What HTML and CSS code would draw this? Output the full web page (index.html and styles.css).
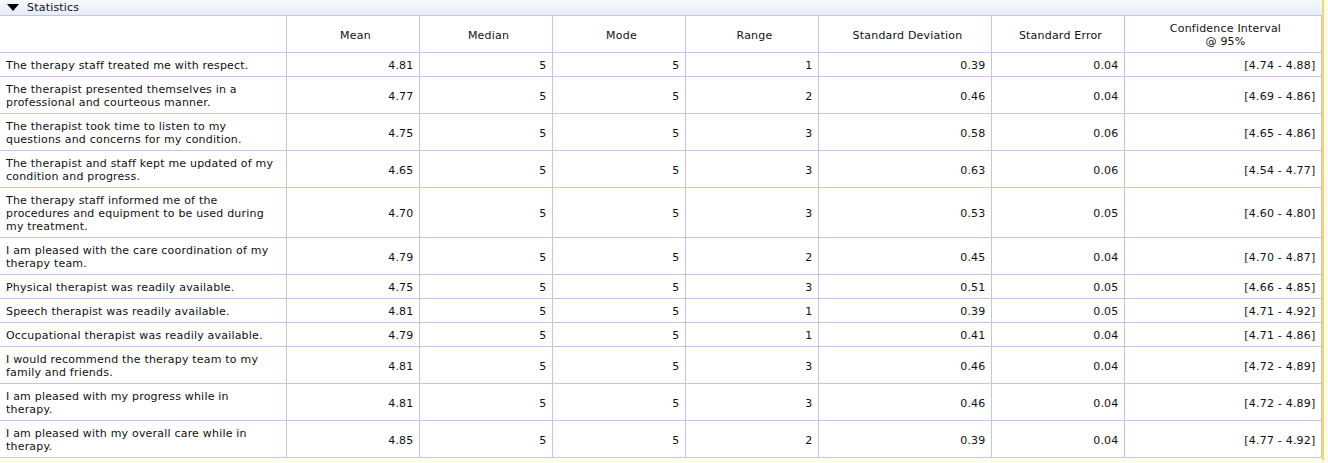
FILE: index.html
```html
<!DOCTYPE html>
<html>
<head>
<meta charset="utf-8">
<link rel="stylesheet" href="styles.css">
</head>
<body>
<div class="panel">
  <div class="bar">
    <svg class="tri" width="12" height="7" viewBox="0 0 12 7"><polygon points="0,0 12,0 6,7" fill="#000"/></svg>
    <span class="bar-title">Statistics</span>
  </div>
  <table class="stats">
    <colgroup>
      <col class="c-q"><col class="c-n"><col class="c-n"><col class="c-n"><col class="c-n"><col class="c-sd"><col class="c-n"><col class="c-ci">
    </colgroup>
    <thead>
      <tr>
        <th></th><th>Mean</th><th>Median</th><th>Mode</th><th>Range</th><th>Standard Deviation</th><th>Standard Error</th><th>Confidence Interval<br>@ 95%</th>
      </tr>
    </thead>
    <tbody>
      <tr><td>The therapy staff treated me with respect.</td><td>4.81</td><td>5</td><td>5</td><td>1</td><td>0.39</td><td>0.04</td><td>[4.74 - 4.88]</td></tr>
      <tr><td>The therapist presented themselves in a professional and courteous manner.</td><td>4.77</td><td>5</td><td>5</td><td>2</td><td>0.46</td><td>0.04</td><td>[4.69 - 4.86]</td></tr>
      <tr><td>The therapist took time to listen to my questions and concerns for my condition.</td><td>4.75</td><td>5</td><td>5</td><td>3</td><td>0.58</td><td>0.06</td><td>[4.65 - 4.86]</td></tr>
      <tr><td>The therapist and staff kept me updated of my condition and progress.</td><td>4.65</td><td>5</td><td>5</td><td>3</td><td>0.63</td><td>0.06</td><td>[4.54 - 4.77]</td></tr>
      <tr><td>The therapy staff informed me of the procedures and equipment to be used during my treatment.</td><td>4.70</td><td>5</td><td>5</td><td>3</td><td>0.53</td><td>0.05</td><td>[4.60 - 4.80]</td></tr>
      <tr><td>I am pleased with the care coordination of my therapy team.</td><td>4.79</td><td>5</td><td>5</td><td>2</td><td>0.45</td><td>0.04</td><td>[4.70 - 4.87]</td></tr>
      <tr><td>Physical therapist was readily available.</td><td>4.75</td><td>5</td><td>5</td><td>3</td><td>0.51</td><td>0.05</td><td>[4.66 - 4.85]</td></tr>
      <tr><td>Speech therapist was readily available.</td><td>4.81</td><td>5</td><td>5</td><td>1</td><td>0.39</td><td>0.05</td><td>[4.71 - 4.92]</td></tr>
      <tr><td>Occupational therapist was readily available.</td><td>4.79</td><td>5</td><td>5</td><td>1</td><td>0.41</td><td>0.04</td><td>[4.71 - 4.86]</td></tr>
      <tr><td>I would recommend the therapy team to my family and friends.</td><td>4.81</td><td>5</td><td>5</td><td>3</td><td>0.46</td><td>0.04</td><td>[4.72 - 4.89]</td></tr>
      <tr><td>I am pleased with my progress while in therapy.</td><td>4.81</td><td>5</td><td>5</td><td>3</td><td>0.46</td><td>0.04</td><td>[4.72 - 4.89]</td></tr>
      <tr><td>I am pleased with my overall care while in therapy.</td><td>4.85</td><td>5</td><td>5</td><td>2</td><td>0.39</td><td>0.04</td><td>[4.77 - 4.92]</td></tr>
    </tbody>
  </table>
</div>
</body>
</html>
```

FILE: styles.css
```css
html, body {
  margin: 0;
  padding: 0;
}
body {
  background: #fefde6;
  font-family: "DejaVu Sans", Verdana, sans-serif;
  font-size: 11px;
  line-height: 13px;
  letter-spacing: 0.2px;
  color: #111;
  height: 463px;
}
.panel {
  width: 1322px;
  background: #fff;
  border-right: 2px solid #f1d76e;
  padding-bottom: 2px;
}
.bar {
  height: 15px;
  display: flex;
  align-items: center;
  background: linear-gradient(#f7f9fe, #e6edf8);
  border-bottom: 1px solid #c6c3e6;
}
.tri {
  margin-left: 7px;
  margin-right: 8px;
}
.bar-title {
  font-size: 11px;
  line-height: 13px;
}
.stats {
  border-collapse: collapse;
  table-layout: fixed;
  width: 1321px;
}
.c-q { width: 286px; }
.c-n { width: 133px; }
.c-sd { width: 173px; }
.c-ci { width: 197px; }
.stats th,
.stats td {
  border: 1px solid #c6c3e6;
  padding: 6px 5px 4px 5px;
  font-size: 11px;
  line-height: 13px;
  vertical-align: middle;
}
.stats tr > :first-child {
  border-left: none;
}
.stats thead th {
  border-top: none;
  font-weight: normal;
  text-align: center;
  padding-left: 8px;
  padding-right: 2px;
}
.stats td {
  text-align: right;
}
.stats td:first-child {
  text-align: left;
  padding-left: 6px;
  padding-right: 10px;
}
```
